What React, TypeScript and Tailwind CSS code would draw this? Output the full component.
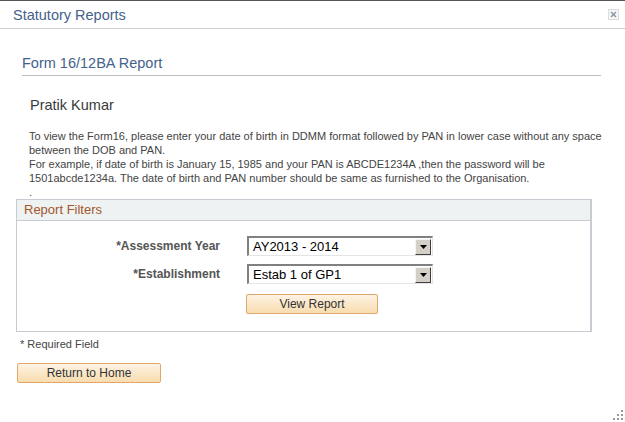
import type { ReactNode } from "react";

function SelectBox({ value }: { value: string }) {
  return (
    <div className="flex h-[20px] w-[186px] items-center border-t-2 border-l-2 border-t-[#808080] border-l-[#808080] border-b border-r border-b-[#e4e4e4] border-r-[#e4e4e4] bg-white">
      <span className="flex-1 truncate pl-[4px] text-[13px] leading-[16px] text-black">{value}</span>
      <span className="mr-[1px] flex h-[16px] w-[16px] items-center justify-center border border-t-[#f4f4f4] border-l-[#f4f4f4] border-b-[#404040] border-r-[#404040] bg-[#d4d0c8]">
        <svg width="7" height="4" viewBox="0 0 7 4">
          <path d="M0 0h7L3.5 4z" fill="#000" />
        </svg>
      </span>
    </div>
  );
}

function OrangeButton({ children, width }: { children: ReactNode; width: string }) {
  return (
    <button
      className={`${width} h-[20px] rounded-[2px] border border-[#e1a86e] bg-gradient-to-b from-[#fdf3e3] to-[#f8dcae] text-[12px] leading-[18px] text-[#333]`}
    >
      {children}
    </button>
  );
}

export default function App() {
  return (
    <div className="relative h-[422px] w-[625px] overflow-hidden border-t border-[#555] bg-white font-['Liberation_Sans',Arial,sans-serif]">
      {/* dialog header */}
      <div className="flex h-[28px] items-center justify-between border-b border-[#cfcfcf] pl-[13px] pr-[6px]">
        <span className="text-[14.5px] leading-[18px] text-[#44628b]">Statutory Reports</span>
        <span className="flex h-[11px] w-[11px] items-center justify-center border border-[#dcdcdc] bg-[#f7f7f7]">
          <svg width="7" height="7" viewBox="0 0 7 7">
            <path d="M1 1l5 5M6 1L1 6" stroke="#8c9bab" strokeWidth="1.6" />
          </svg>
        </span>
      </div>

      <div className="pl-[16px] pr-[24px]">
        <div className="ml-[6px] mt-[25px] border-b border-[#bdbdbd] pb-[3px] text-[14.5px] leading-[18px] text-[#44628b]">
          Form 16/12BA Report
        </div>

        <div className="ml-[14px] mt-[20px] text-[14.5px] leading-[18px] text-[#3a3a3a]">Pratik Kumar</div>

        <div className="ml-[13px] mt-[15px] w-[574px] text-[11px] leading-[14px] text-[#444]">
          <p>
            To view the Form16, please enter your date of birth in DDMM format followed by PAN in lower case without any
            space between the DOB and PAN.
          </p>
          <p>
            For example, if date of birth is January 15, 1985 and your PAN is ABCDE1234A ,then the password will be
            1501abcde1234a. The date of birth and PAN number should be same as furnished to the Organisation.
          </p>
          <p>.</p>
        </div>

        {/* filters group box */}
        <div className="w-[576px] border border-r-2 border-[#c7ccd3]">
          <div className="h-[21px] border-b border-[#c7ccd3] bg-[#eef2f3] pl-[7px] text-[13px] leading-[20px] text-[#a3572a]">
            Report Filters
          </div>
          <div className="grid grid-cols-[203px_186px] items-center gap-x-[27px] pb-[17px] pt-[15px]">
            <span className="text-right text-[12px] font-bold leading-[20px] text-[#555]">*Assessment Year</span>
            <SelectBox value="AY2013 - 2014" />
            <span className="mt-[8px] text-right text-[12px] font-bold leading-[20px] text-[#555]">*Establishment</span>
            <div className="mt-[8px] flex">
              <SelectBox value="Estab 1 of GP1" />
            </div>
            <span />
            <div className="-ml-[1px] mt-[10px] flex">
              <OrangeButton width="w-[132px]">View Report</OrangeButton>
            </div>
          </div>
        </div>

        <div className="ml-[4px] mt-[5px] text-[11px] leading-[14px] text-[#444]">* Required Field</div>

        <div className="ml-[1px] mt-[12px] flex">
          <OrangeButton width="w-[144px]">Return to Home</OrangeButton>
        </div>
      </div>

      {/* resize grip */}
      <svg className="absolute bottom-[2px] right-[2px]" width="10" height="10" viewBox="0 0 10 10">
        <rect x="8" y="0" width="2" height="2" fill="#9a9a9a" />
        <rect x="4" y="4" width="2" height="2" fill="#9a9a9a" />
        <rect x="8" y="4" width="2" height="2" fill="#9a9a9a" />
        <rect x="0" y="8" width="2" height="2" fill="#9a9a9a" />
        <rect x="4" y="8" width="2" height="2" fill="#9a9a9a" />
        <rect x="8" y="8" width="2" height="2" fill="#9a9a9a" />
      </svg>
    </div>
  );
}
